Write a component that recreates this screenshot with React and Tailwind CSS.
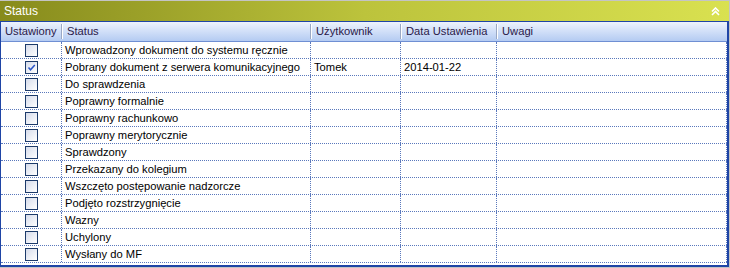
import React from "react";

const rows = [
  { status: "Wprowadzony dokument do systemu ręcznie" },
  { status: "Pobrany dokument z serwera komunikacyjnego", checked: true, user: "Tomek", date: "2014-01-22" },
  { status: "Do sprawdzenia" },
  { status: "Poprawny formalnie" },
  { status: "Poprawny rachunkowo" },
  { status: "Poprawny merytorycznie" },
  { status: "Sprawdzony" },
  { status: "Przekazany do kolegium" },
  { status: "Wszczęto postępowanie nadzorcze" },
  { status: "Podjęto rozstrzygnięcie" },
  { status: "Wazny" },
  { status: "Uchylony" },
  { status: "Wysłany do MF" },
];

function Checkbox({ checked }) {
  return (
    <div className="w-[13px] h-[13px] border border-[#1c3a6a] bg-gradient-to-br from-[#d6dceb] to-[#ffffff] flex items-center justify-center">
      {checked && (
        <svg width="9" height="9" viewBox="0 0 9 9">
          <path d="M1.5 4.5 L3.5 6.8 L7.8 2" fill="none" stroke="#2a55c8" strokeWidth="1.5" />
        </svg>
      )}
    </div>
  );
}

function HeadCell({ children, className = "" }) {
  return (
    <div className={"h-full flex items-center pl-[4px] whitespace-nowrap " + className}>
      {children}
    </div>
  );
}

function Sep() {
  return (
    <div className="h-[15px] flex shrink-0">
      <div className="w-px bg-[#9aa8c4]" />
      <div className="w-px bg-white" />
    </div>
  );
}

export default function App() {
  return (
    <div
      className="w-[730px] h-[268px] bg-white border-t border-r border-b border-[#c4c4c4] flex flex-col overflow-hidden"
      style={{ fontFamily: '"Liberation Sans", Arial, sans-serif' }}
    >
      {/* Title bar */}
      <div className="h-[20px] shrink-0 bg-gradient-to-r from-[#878b1c] via-[#bcc33c] to-[#d9e150] flex items-center justify-between pl-[4px] pr-[9px]">
        <span className="text-white text-[12px] leading-none">Status</span>
        <svg width="9" height="9" viewBox="0 0 9 9">
          <path d="M1 4.5 L4.5 1 L8 4.5 M1 8 L4.5 4.5 L8 8" fill="none" stroke="#ffffff" strokeWidth="1.6" />
        </svg>
      </div>

      {/* Grid */}
      <div className="flex-1 flex flex-col border-t border-l border-r-2 border-b-2 border-[#1f45a6]">
        <div className="h-[20px] shrink-0 flex items-center bg-gradient-to-b from-[#eef3fd] to-[#b4cbf2] border-b border-[#6f8fd3] text-[11.2px] text-[#2a1848]">
          <HeadCell className="w-[60px]">Ustawiony</HeadCell>
          <Sep />
          <HeadCell className="w-[247px]">Status</HeadCell>
          <Sep />
          <HeadCell className="w-[88px]">Użytkownik</HeadCell>
          <Sep />
          <HeadCell className="w-[94px]">Data Ustawienia</HeadCell>
          <Sep />
          <HeadCell className="flex-1">Uwagi</HeadCell>
        </div>

        {rows.map((r, i) => (
          <div key={i} className="h-[17px] shrink-0 flex border-b border-dotted border-[#5a78bc] text-[11.2px] text-black">
            <div className="w-[61px] shrink-0 flex items-center justify-center border-r border-dotted border-[#5a78bc]">
              <Checkbox checked={r.checked} />
            </div>
            <div className="w-[249px] shrink-0 flex items-center pl-[3px] border-r border-dotted border-[#5a78bc] whitespace-nowrap overflow-hidden">
              {r.status}
            </div>
            <div className="w-[90px] shrink-0 flex items-center pl-[3px] border-r border-dotted border-[#5a78bc]">
              {r.user}
            </div>
            <div className="w-[96px] shrink-0 flex items-center pl-[3px] border-r border-dotted border-[#5a78bc]">
              {r.date}
            </div>
            <div className="flex-1 border-r border-dotted border-[#5a78bc]" />
          </div>
        ))}
      </div>
    </div>
  );
}
